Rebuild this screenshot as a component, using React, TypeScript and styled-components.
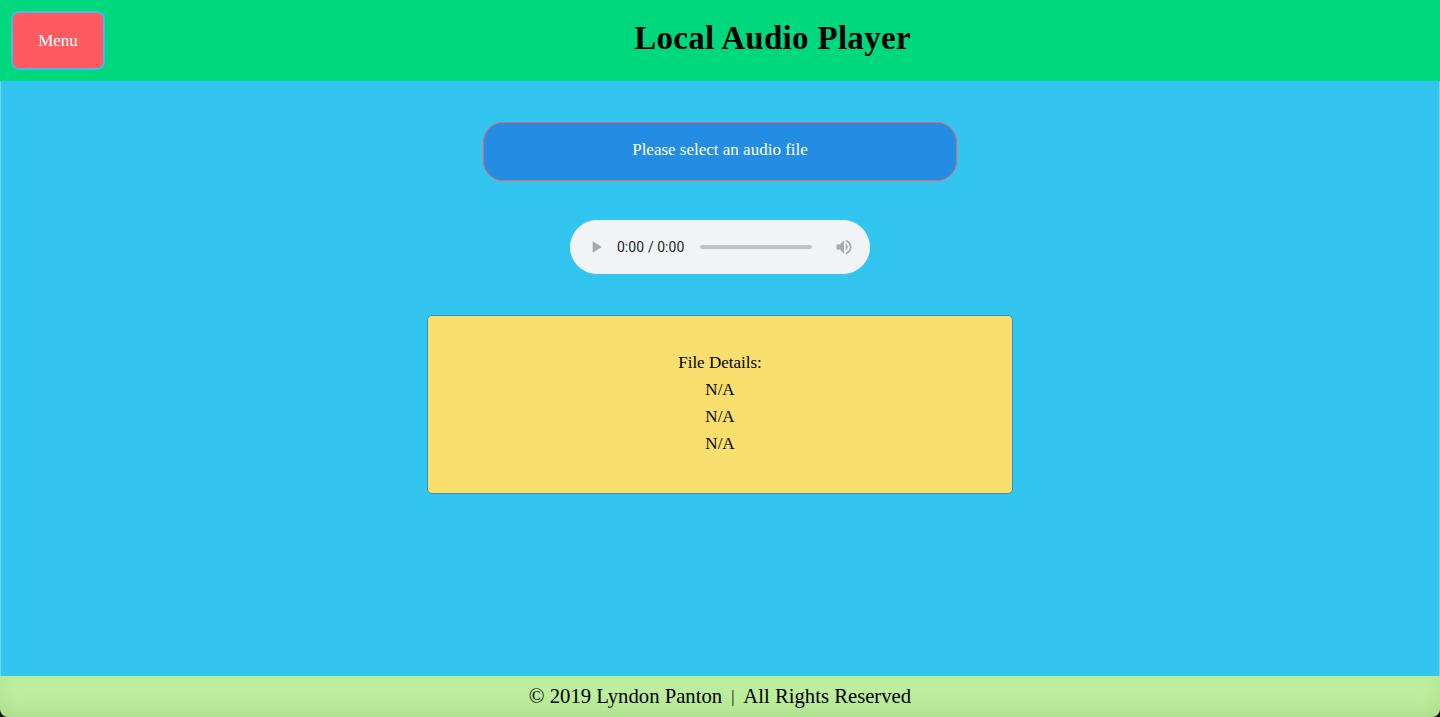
import styled, { createGlobalStyle } from 'styled-components';

const GlobalStyle = createGlobalStyle`
  html, body {
    margin: 0;
    padding: 0;
    height: 100%;
    background: #111;
  }
  body {
    font-family: "Liberation Serif", "DejaVu Serif", serif;
  }
  #root {
    height: 100%;
  }
`;

const Page = styled.div`
  display: flex;
  flex-direction: column;
  height: 100vh;
`;

const Header = styled.header`
  display: flex;
  align-items: center;
  box-sizing: border-box;
  height: 81px;
  padding: 0 0 0 11px;
  background: #00d87e;
  flex-shrink: 0;
`;

const MenuButton = styled.button`
  align-self: flex-start;
  margin-top: 11px;
  width: 94px;
  height: 59px;
  flex-shrink: 0;
  background: #ff5a5f;
  border: 2px solid #4ab8e8;
  border-radius: 8px;
  color: #fff;
  font-family: "Liberation Serif", serif;
  font-size: 17px;
  cursor: pointer;
`;

const Title = styled.h1`
  flex: 1;
  margin: 0 0 4px;
  text-align: center;
  font-size: 33px;
  font-weight: bold;
  color: #000;
  letter-spacing: 0.3px;
`;

const Main = styled.main`
  flex: 1;
  display: flex;
  flex-direction: column;
  align-items: center;
  background: #31c5ef;
  border-left: 1px solid #6fd6f3;
  border-right: 1px solid #6fd6f3;
  padding-top: 41px;
`;

const FileLabel = styled.label`
  display: flex;
  align-items: center;
  justify-content: center;
  box-sizing: border-box;
  width: 474px;
  height: 59px;
  padding-bottom: 3px;
  background: #228de2;
  border: 1px solid #ff5a5f;
  border-radius: 20px;
  color: #fff;
  font-size: 17px;
  cursor: pointer;

  input {
    display: none;
  }
`;

const Player = styled.audio`
  margin-top: 39px;
  width: 300px;
  height: 54px;
`;

const Details = styled.div`
  margin-top: 41px;
  box-sizing: border-box;
  width: 586px;
  height: 179px;
  padding-bottom: 4px;
  background: #f9df6d;
  border: 1px solid #3a8fbf;
  border-radius: 5px;
  display: flex;
  flex-direction: column;
  align-items: center;
  justify-content: center;
  font-size: 17px;
  line-height: 27px;
  color: #000;
`;

const Footer = styled.footer`
  height: 41px;
  flex-shrink: 0;
  display: flex;
  align-items: center;
  justify-content: center;
  background: linear-gradient(#c2f5a3, #b6e698);
  border-radius: 0 0 8px 8px;
  box-shadow: inset 0 0 18px rgba(140, 200, 110, 0.35);
  font-size: 20.7px;
  color: #000;
`;

const Sep = styled.span`
  margin: 0 9px;
  font-size: 16px;
`;

export default function App() {
  return (
    <>
      <GlobalStyle />
      <Page>
        <Header>
          <MenuButton>Menu</MenuButton>
          <Title>Local Audio Player</Title>
        </Header>
        <Main>
          <FileLabel>
            Please select an audio file
            <input type="file" accept="audio/*" />
          </FileLabel>
          <Player controls controlsList="nodownload noplaybackrate noremoteplayback" disableRemotePlayback />
          <Details>
            <div>File Details:</div>
            <div>N/A</div>
            <div>N/A</div>
            <div>N/A</div>
          </Details>
        </Main>
        <Footer>
          © 2019 Lyndon Panton<Sep>|</Sep>All Rights Reserved
        </Footer>
      </Page>
    </>
  );
}
